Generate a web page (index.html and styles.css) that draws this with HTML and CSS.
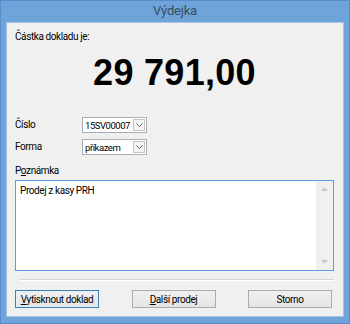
FILE: index.html
```html
<!DOCTYPE html>
<html lang="cs">
<head>
<meta charset="UTF-8">
<title>Výdejka</title>
<link rel="stylesheet" href="styles.css">
</head>
<body>

<div class="window">
    <div class="titlebar">Výdejka</div>

    <div class="client">
        <div class="label">Částka dokladu je:</div>
        <div class="amount">29 791,00</div>

        <div class="fields">
            <div class="field">
                <span class="label">Číslo</span>
                <div class="combo">
                    <span class="combo-text">15SV00007</span>
                    <span class="combo-btn">
                        <svg width="7" height="4" viewBox="0 0 7 4"><path d="M0.5 0.5 L3.5 3.5 L6.5 0.5" fill="none" stroke="#606060" stroke-width="1"/></svg>
                    </span>
                </div>
            </div>
            <div class="field">
                <span class="label">Forma</span>
                <div class="combo">
                    <span class="combo-text">příkazem</span>
                    <span class="combo-btn">
                        <svg width="7" height="4" viewBox="0 0 7 4"><path d="M0.5 0.5 L3.5 3.5 L6.5 0.5" fill="none" stroke="#606060" stroke-width="1"/></svg>
                    </span>
                </div>
            </div>
        </div>

        <div class="label note-label">P<u>o</u>známka</div>
        <div class="note">
            <div class="note-text">Prodej z kasy PRH</div>
            <div class="scrollbar">
                <svg width="7" height="4" viewBox="0 0 7 4"><path d="M0 4 L3.5 0.5 L7 4 Z" fill="#c8c8c8"/></svg>
                <svg width="7" height="4" viewBox="0 0 7 4"><path d="M0 0 L3.5 3.5 L7 0 Z" fill="#c8c8c8"/></svg>
            </div>
        </div>

        <div class="separator"></div>

        <div class="buttons">
            <button class="btn default"><u>V</u>ytisknout doklad</button>
            <button class="btn"><u>D</u>alší prodej</button>
            <button class="btn">Storno</button>
        </div>
    </div>
</div>

</body>
</html>
```

FILE: styles.css
```css
body {
    margin: 0;
    padding: 0;
    font-family: Roboto, "Liberation Sans", sans-serif;
    font-size: 10px;
    letter-spacing: -0.4px;
    color: #000;
}
.window {
    width: 350px;
    height: 324px;
    box-sizing: border-box;
    background-color: #6fa4db;
    border: 1px solid #5a8ccc;
    padding: 0 5px 6px 5px;
    display: flex;
    flex-direction: column;
}
.titlebar {
    height: 21px;
    line-height: 20px;
    text-align: center;
    font-size: 13px;
    letter-spacing: -0.2px;
    color: #3a4c60;
}
.client {
    flex: 1;
    background-color: #f0f0f0;
    border: 1px solid #a9c3e2;
    padding: 7px 9px 0 8px;
    display: flex;
    flex-direction: column;
}
.label {
    line-height: 14px;
}
.amount {
    margin-top: 9px;
    font-family: "Liberation Sans", Arial, sans-serif;
    font-weight: bold;
    font-size: 36px;
    line-height: 40px;
    text-align: center;
    letter-spacing: 0.3px;
}
.fields {
    margin-top: 24px;
    display: flex;
    flex-direction: column;
    gap: 6px;
}
.field {
    display: flex;
    align-items: center;
    height: 16px;
}
.field .label {
    width: 67px;
}
.combo {
    width: 65px;
    height: 16px;
    box-sizing: border-box;
    background-color: #fff;
    border: 1px solid #abadb3;
    display: flex;
    align-items: center;
    padding: 0 1px 0 2px;
}
.combo-text {
    flex: 1;
    font-size: 9.5px;
    letter-spacing: -0.45px;
}
.combo-btn {
    width: 12px;
    height: 12px;
    box-sizing: border-box;
    border: 1px solid #c4c4c4;
    background-color: #f4f4f4;
    display: flex;
    align-items: center;
    justify-content: center;
}
.note-label {
    margin-top: 9px;
}
.note {
    margin-top: 2px;
    height: 91px;
    box-sizing: border-box;
    background-color: #fff;
    border: 1px solid #5b9de2;
    display: flex;
}
.note-text {
    flex: 1;
    padding: 3px 4px;
    line-height: 14px;
}
.scrollbar {
    width: 17px;
    background-color: #f0f0f0;
    display: flex;
    flex-direction: column;
    justify-content: space-between;
    align-items: center;
    padding: 6px 0;
}
.separator {
    margin: 8px 0 0 4px;
    border-top: 1px solid #d5d5d5;
    border-bottom: 1px solid #fff;
}
.buttons {
    margin-top: 9px;
    display: flex;
    justify-content: space-between;
    margin-right: 2px;
}
.btn {
    width: 84px;
    height: 18px;
    padding: 0;
    font-family: Roboto, "Liberation Sans", sans-serif;
    font-size: 10px;
    letter-spacing: -0.4px;
    color: #000;
    border: 1px solid #acacac;
    background: linear-gradient(#f0f0f0, #e5e5e5);
}
.btn.default {
    border-color: #3c7fb1;
    box-shadow: inset 0 0 0 1px #e5f1fb;
}
```
